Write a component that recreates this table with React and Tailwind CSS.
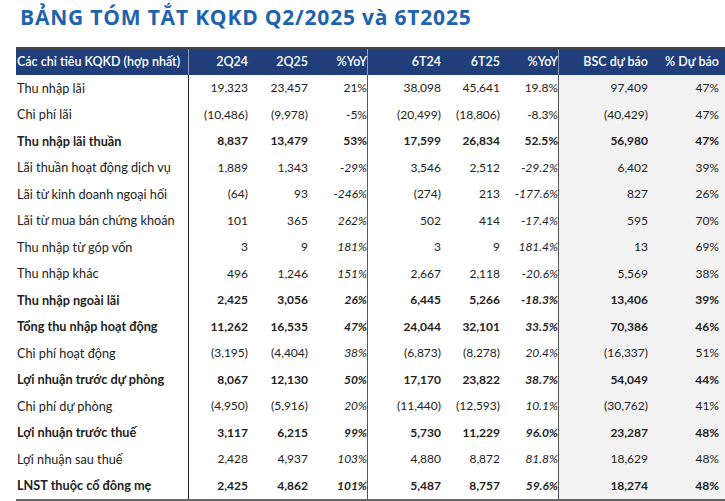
import React from 'react';

const rows = [
  ['Thu nhập lãi', '19,323', '23,457', '21%', '38,098', '45,641', '19.8%', '97,409', '47%', false, false],
  ['Chi phí lãi', '(10,486)', '(9,978)', '-5%', '(20,499)', '(18,806)', '-8.3%', '(40,429)', '47%', false, false],
  ['Thu nhập lãi thuần', '8,837', '13,479', '53%', '17,599', '26,834', '52.5%', '56,980', '47%', true, false],
  ['Lãi thuần hoạt động dịch vụ', '1,889', '1,343', '-29%', '3,546', '2,512', '-29.2%', '6,402', '39%', false, true],
  ['Lãi từ kinh doanh ngoại hối', '(64)', '93', '-246%', '(274)', '213', '-177.6%', '827', '26%', false, true],
  ['Lãi từ mua bán chứng khoán', '101', '365', '262%', '502', '414', '-17.4%', '595', '70%', false, true],
  ['Thu nhập từ góp vốn', '3', '9', '181%', '3', '9', '181.4%', '13', '69%', false, true],
  ['Thu nhập khác', '496', '1,246', '151%', '2,667', '2,118', '-20.6%', '5,569', '38%', false, true],
  ['Thu nhập ngoài lãi', '2,425', '3,056', '26%', '6,445', '5,266', '-18.3%', '13,406', '39%', true, true],
  ['Tổng thu nhập hoạt động', '11,262', '16,535', '47%', '24,044', '32,101', '33.5%', '70,386', '46%', true, true],
  ['Chi phí hoạt động', '(3,195)', '(4,404)', '38%', '(6,873)', '(8,278)', '20.4%', '(16,337)', '51%', false, true],
  ['Lợi nhuận trước dự phòng', '8,067', '12,130', '50%', '17,170', '23,822', '38.7%', '54,049', '44%', true, true],
  ['Chi phí dự phòng', '(4,950)', '(5,916)', '20%', '(11,440)', '(12,593)', '10.1%', '(30,762)', '41%', false, true],
  ['Lợi nhuận trước thuế', '3,117', '6,215', '99%', '5,730', '11,229', '96.0%', '23,287', '48%', true, true],
  ['Lợi nhuận sau thuế', '2,428', '4,937', '103%', '4,880', '8,872', '81.8%', '18,629', '48%', false, true],
  ['LNST thuộc cổ đông mẹ', '2,425', '4,862', '101%', '5,487', '8,757', '59.6%', '18,274', '48%', true, true],
];

const grid = 'grid grid-cols-[173px_59px_60px_60px_73px_59px_59px_89px_1fr]';

export default function App() {
  return (
    <div className="w-[725px] h-[501px] bg-white overflow-hidden text-[#222]">
      {/* Title */}
      <div className="h-[47px] pl-[20px] pt-[3px]">
        <h1 className="font-['Open_Sans',sans-serif] font-bold text-[21px] leading-[28px] text-[#1f62b0] tracking-[0.8px]">
          BẢNG TÓM TẮT KQKD Q2/2025 và 6T2025
        </h1>
      </div>

      <div className="ml-[16px] border-t-2 border-[#444]">
        {/* Header */}
        <div className={`${grid} h-[26px] bg-[#203f7a] text-white font-['Lato',sans-serif] font-semibold text-[12.5px] items-center`}>
          <div className="pl-[1px] h-full flex items-center border-r border-[#8a9bbd]">Các chỉ tiêu KQKD (hợp nhất)</div>
          <div className="text-right">2Q24</div>
          <div className="text-right">2Q25</div>
          <div className="text-right h-full flex items-center justify-end border-r border-[#8a9bbd]">%YoY</div>
          <div className="text-right">6T24</div>
          <div className="text-right">6T25</div>
          <div className="text-right h-full flex items-center justify-end border-r border-[#8a9bbd]">%YoY</div>
          <div className="text-right">BSC dự báo</div>
          <div className="text-right pr-[6px]">% Dự báo</div>
        </div>

        {/* Body */}
        <div className="border-b-2 border-[#666]">
          {rows.map((r) => {
            const bold = r[9];
            const it = r[10] ? 'italic' : '';
            const w = bold ? 'font-bold' : 'font-normal';
            return (
              <div key={r[0]} className={`${grid} h-[26.5px] items-stretch font-['Lato',sans-serif] text-[12px] ${w}`}>
                <div className="pl-[1px] flex items-center border-r border-[#222] text-[12.7px]">{r[0]}</div>
                <div className="flex items-center justify-end">{r[1]}</div>
                <div className="flex items-center justify-end">{r[2]}</div>
                <div className={`flex items-center justify-end border-r border-[#555] ${it}`}>{r[3]}</div>
                <div className="flex items-center justify-end">{r[4]}</div>
                <div className="flex items-center justify-end">{r[5]}</div>
                <div className={`flex items-center justify-end border-r border-[#555] ${it}`}>{r[6]}</div>
                <div className="flex items-center justify-end bg-[#f2f2f2]">{r[7]}</div>
                <div className="flex items-center justify-end bg-[#f2f2f2] pr-[6px]">{r[8]}</div>
              </div>
            );
          })}
        </div>
      </div>
    </div>
  );
}
